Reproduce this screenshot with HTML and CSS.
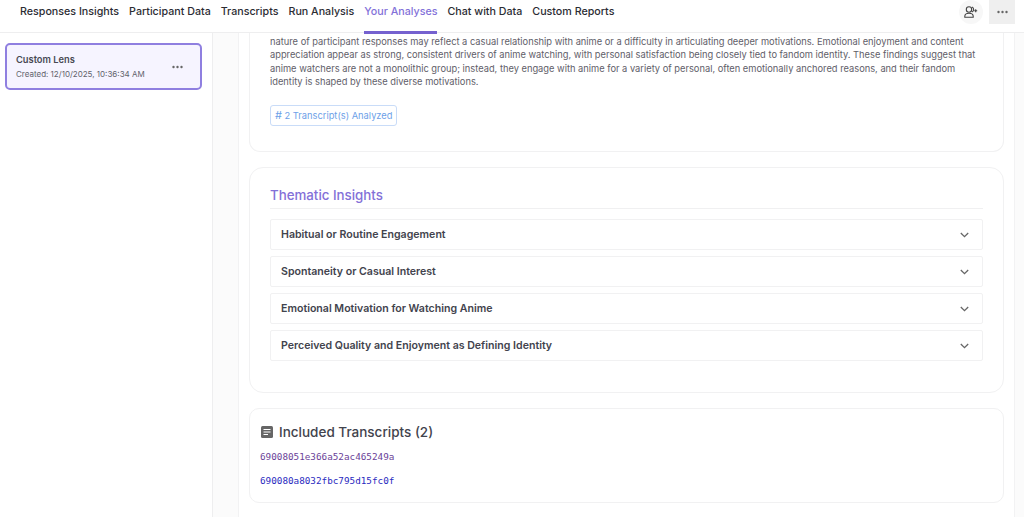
FILE: index.html
```html
<!DOCTYPE html>
<html lang="en">
<head>
  <meta charset="UTF-8">
  <title>Your Analyses</title>
  <link rel="stylesheet" href="styles.css">
</head>
<body>
  <div class="top-bar">
    <nav class="tabs">
      <a class="tab">Responses Insights</a>
      <a class="tab">Participant Data</a>
      <a class="tab">Transcripts</a>
      <a class="tab">Run Analysis</a>
      <a class="tab active">Your Analyses</a>
      <a class="tab">Chat with Data</a>
      <a class="tab">Custom Reports</a>
    </nav>
    <div class="top-actions">
      <button class="round-btn">
        <svg width="14" height="12" viewBox="0 0 14 12" fill="none" stroke="#444" stroke-width="1.100">
          <circle cx="5" cy="3.500" r="2.700"/>
          <path d="M.8 11.200v-1c0-1.700 1.800-3 4.200-3s4.200 1.300 4.200 3v1z"/>
          <path d="M8 1a2.700 2.700 0 0 1 0 5"/>
          <path d="M11.700 3.200v3M10.200 4.700h3"/>
        </svg>
      </button>
      <button class="more-btn">
        <svg width="11" height="4" viewBox="0 0 11 4" fill="#666"><circle cx="1.500" cy="2" r="1.200"/><circle cx="5.500" cy="2" r="1.200"/><circle cx="9.500" cy="2" r="1.200"/></svg>
      </button>
    </div>
  </div>

  <div class="page">
    <aside class="sidebar">
      <div class="lens-card">
        <div>
          <div class="lens-title">Custom Lens</div>
          <div class="lens-date">Created: 12/10/2025, 10:36:34 AM</div>
        </div>
        <svg class="lens-more" width="11" height="4" viewBox="0 0 11 4" fill="#666"><circle cx="1.500" cy="2" r="1.200"/><circle cx="5.500" cy="2" r="1.200"/><circle cx="9.500" cy="2" r="1.200"/></svg>
      </div>
    </aside>

    <main class="content">
      <div class="panel">
        <section class="card summary-card">
          <p class="summary-text">nature of participant responses may reflect a casual relationship with anime or a difficulty in articulating deeper motivations. Emotional enjoyment and content appreciation appear as strong, consistent drivers of anime watching, with personal satisfaction being closely tied to fandom identity. These findings suggest that anime watchers are not a monolithic group; instead, they engage with anime for a variety of personal, often emotionally anchored reasons, and their fandom identity is shaped by these diverse motivations.</p>
          <span class="count-chip"><span class="chip-hash">#</span> 2 Transcript(s) Analyzed</span>
        </section>

        <section class="card themes-card">
          <h2 class="themes-title">Thematic Insights</h2>
          <div class="theme-list">
            <div class="theme-row">Habitual or Routine Engagement
              <svg width="9" height="6" viewBox="0 0 9 6" fill="none" stroke="#666" stroke-width="1.300"><path d="M.8 1l3.700 3.700L8.200 1"/></svg>
            </div>
            <div class="theme-row">Spontaneity or Casual Interest
              <svg width="9" height="6" viewBox="0 0 9 6" fill="none" stroke="#666" stroke-width="1.300"><path d="M.8 1l3.700 3.700L8.200 1"/></svg>
            </div>
            <div class="theme-row">Emotional Motivation for Watching Anime
              <svg width="9" height="6" viewBox="0 0 9 6" fill="none" stroke="#666" stroke-width="1.300"><path d="M.8 1l3.700 3.700L8.200 1"/></svg>
            </div>
            <div class="theme-row">Perceived Quality and Enjoyment as Defining Identity
              <svg width="9" height="6" viewBox="0 0 9 6" fill="none" stroke="#666" stroke-width="1.300"><path d="M.8 1l3.700 3.700L8.200 1"/></svg>
            </div>
          </div>
        </section>

        <section class="card transcripts-card">
          <h3 class="transcripts-title">
            <svg class="doc-icon" width="12" height="12" viewBox="0 0 12 12"><rect width="12" height="12" rx="1.500" fill="#666"/><path d="M2.500 3.500h7M2.500 6h7M2.500 8.500h4.500" stroke="#fff" stroke-width="1.100"/></svg>
            Included Transcripts (2)
          </h3>
          <a class="transcript-link visited">69008051e366a52ac465249a</a>
          <a class="transcript-link">690080a8032fbc795d15fc0f</a>
        </section>
      </div>
    </main>
  </div>
</body>
</html>
```

FILE: styles.css
```css
html, body {
  height: 100%;
}
body {
  margin: 0;
  display: flex;
  flex-direction: column;
  overflow: hidden;
  background: #fff;
  color: #33343d;
  font-family: 'Inter', Arial, sans-serif;
}
/* Top bar */
.top-bar {
  flex: none;
  height: 32px;
  display: flex;
  justify-content: space-between;
  border-bottom: 1px solid #eeeeef;
  background: #fff;
  position: relative;
  z-index: 1;
}
.tabs {
  display: flex;
  gap: 10px;
  padding-left: 20px;
}
.tab {
  height: 34px;
  box-sizing: border-box;
  padding-top: 5px;
  font-size: 10.700px;
  font-weight: 500;
  line-height: 14px;
  color: #2b2c33;
  border-bottom: 3px solid transparent;
}
.tab.active {
  color: #8371d9;
  border-bottom-color: #7561cf;
}
.top-actions {
  display: flex;
  align-items: flex-start;
  gap: 6px;
  padding-right: 9px;
}
.round-btn, .more-btn {
  display: flex;
  align-items: center;
  justify-content: center;
  padding: 0;
  border: none;
}
.round-btn {
  width: 24px;
  height: 24px;
  border-radius: 50%;
  background: #f7f7f7;
}
.more-btn {
  width: 26px;
  height: 24px;
  background: #efefef;
}
/* Page */
.page {
  flex: 1;
  min-height: 0;
  display: flex;
}
.sidebar {
  flex: none;
  width: 213px;
  box-sizing: border-box;
  padding: 10px 10px 10px 5px;
  border-right: 1px solid #eeeeef;
}
.lens-card {
  height: 47px;
  box-sizing: border-box;
  display: flex;
  align-items: center;
  justify-content: space-between;
  padding: 0 17px 0 9px;
  border: 2px solid #8f7fe0;
  border-radius: 5px;
  background: #f6f4ff;
}
.lens-title {
  font-size: 9.300px;
  font-weight: 600;
  line-height: 13px;
  color: #484953;
}
.lens-date {
  margin-top: 2px;
  font-size: 8px;
  line-height: 12px;
  color: #62636c;
}
.content {
  flex: 1;
  min-width: 0;
  padding-left: 25px;
  background: #fbfbfb;
}
.panel {
  height: 100%;
  margin-right: 9px;
  box-sizing: border-box;
  padding: 0 10px;
  background: #fff;
  border-left: 1px solid #f2f2f3;
  border-right: 1px solid #f2f2f3;
  display: flex;
  flex-direction: column;
  gap: 15px;
}
.card {
  flex: none;
  box-sizing: border-box;
  border: 1px solid #f1f1f2;
  border-radius: 11px;
  background: #fff;
}
.summary-card {
  height: 120px;
  margin-top: -1px;
  padding: 2.500px 20px 0;
  border-top: none;
  border-radius: 0 0 11px 11px;
}
.summary-text {
  margin: 0 0 14.500px;
  font-size: 9.300px;
  line-height: 13.500px;
  color: #5f6069;
}
.count-chip {
  display: inline-block;
  padding: 0 4px;
  height: 21px;
  box-sizing: border-box;
  border: 1px solid #c9dcf8;
  border-radius: 3px;
  font-size: 9.300px;
  line-height: 18px;
  color: #6d9fe8;
}
.chip-hash {
  font-size: 11px;
}
.themes-card {
  height: 226px;
  padding: 18px 20px 0;
  border-radius: 14px;
}
.themes-title {
  margin: 0 0 10px;
  padding-bottom: 4px;
  border-bottom: 1px solid #f0f0f1;
  font-size: 13.300px;
  font-weight: 500;
  line-height: 18px;
  color: #8370d8;
}
.theme-list {
  display: flex;
  flex-direction: column;
  gap: 6px;
}
.theme-row {
  height: 31px;
  box-sizing: border-box;
  display: flex;
  align-items: center;
  justify-content: space-between;
  padding: 0 13px 0 10px;
  border: 1px solid #f1f1f2;
  border-radius: 2px;
  font-size: 10.600px;
  font-weight: 600;
  color: #42434d;
}
.transcripts-card {
  height: 95px;
  padding: 14px 10px 0;
  border-radius: 10px;
}
.transcripts-title {
  display: flex;
  align-items: center;
  gap: 6px;
  margin: 0 0 10px;
  font-size: 13.500px;
  font-weight: 500;
  line-height: 18px;
  color: #42434d;
}
.doc-icon {
  margin-left: 1px;
}
.transcript-link {
  display: block;
  margin-bottom: 13px;
  font-family: 'DejaVu Sans Mono', monospace;
  font-size: 9.300px;
  line-height: 11px;
  color: #2a2ac0;
}
.transcript-link.visited {
  color: #6b3f98;
}
```
